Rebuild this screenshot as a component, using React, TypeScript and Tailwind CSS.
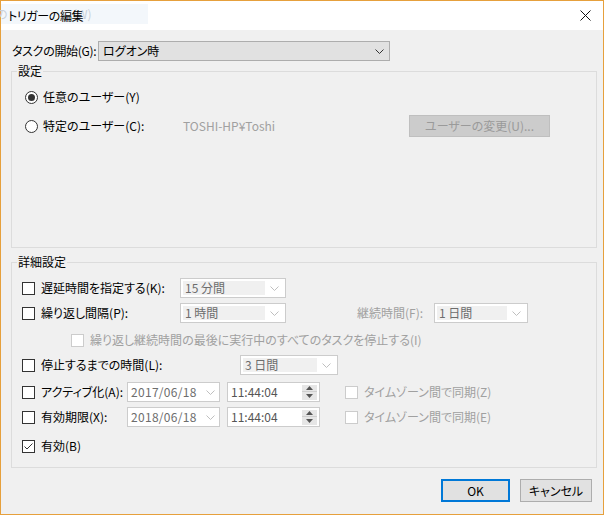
import React from 'react';

const font = "[font-family:'Noto_Sans_CJK_JP',sans-serif] [font-feature-settings:'palt']";

function Chevron({ color = '#333333' }: { color?: string }) {
  return (
    <svg width="9" height="5" viewBox="0 0 9 5" fill="none">
      <polyline points="0.5,0.5 4.5,4.5 8.5,0.5" stroke={color} strokeWidth="1" />
    </svg>
  );
}

function CheckBox({ checked = false, disabled = false }: { checked?: boolean; disabled?: boolean }) {
  return (
    <span
      className={
        'flex h-[13px] w-[13px] shrink-0 items-center justify-center border bg-white ' +
        (disabled ? 'border-[#cccccc]' : 'border-[#333333]')
      }
    >
      {checked && (
        <svg width="11" height="11" viewBox="0 0 11 11" fill="none">
          <polyline points="1.5,5.5 4,8 9.5,2.5" stroke="#333333" strokeWidth="1" />
        </svg>
      )}
    </span>
  );
}

function Radio({ checked = false }: { checked?: boolean }) {
  return (
    <span className="flex h-[13px] w-[13px] shrink-0 items-center justify-center rounded-full border border-[#333333] bg-white">
      {checked && <span className="h-[7px] w-[7px] rounded-full bg-[#333333]" />}
    </span>
  );
}

function Combo({ text, width }: { text: string; width: string }) {
  return (
    <div className={`flex h-[20px] shrink-0 items-center border border-[#cccccc] bg-white p-[2px] ${width}`}>
      <div className="h-full flex-1 bg-[#f0f0f0] pl-[2px] text-[12px] leading-[14px] text-[#6d6d6d]">{text}</div>
      <div className="flex w-[18px] justify-center">
        <Chevron color="#bfbfbf" />
      </div>
    </div>
  );
}

function DateBox({ text }: { text: string }) {
  return (
    <div className="flex h-[20px] w-[93px] shrink-0 items-center border border-[#cccccc] bg-white pl-[3px]">
      <span className="flex-1 text-[12px] leading-[16px] tracking-[0.3px] text-[#6d6d6d]">{text}</span>
      <span className="flex w-[18px] justify-center">
        <Chevron color="#bfbfbf" />
      </span>
    </div>
  );
}

function TimeBox({ text }: { text: string }) {
  return (
    <div className="flex h-[20px] w-[93px] shrink-0 items-center border border-[#cccccc] bg-white pl-[3px] pr-[2px]">
      <span className="flex-1 text-[12px] leading-[16px] text-[#555555]">{text}</span>
      <span className="flex h-[15px] w-[15px] flex-col bg-[#e6e6e6]">
        <span className="flex h-[7px] items-center justify-center border-b border-[#cfcfcf]">
          <svg width="7" height="4" viewBox="0 0 7 4">
            <polygon points="0,4 3.5,0 7,4" fill="#555555" />
          </svg>
        </span>
        <span className="flex h-[8px] items-center justify-center">
          <svg width="7" height="4" viewBox="0 0 7 4">
            <polygon points="0,0 3.5,4 7,0" fill="#555555" />
          </svg>
        </span>
      </span>
    </div>
  );
}

export default function App() {
  return (
    <div className={`h-[516px] w-[606px] whitespace-nowrap bg-white text-[12px] leading-[16px] text-black ${font}`}>
      <div className="flex h-[515px] w-[604px] flex-col border border-[#e6a03c]">
        <div className="relative flex h-[29px] shrink-0 items-center bg-white">
          <div className="absolute left-0 top-[3px] h-[20px] w-[147px] bg-[#f3f7fb]">
            <span className="absolute left-[-5px] top-[2px] text-[12px] text-[#c9d1da]">の</span>
            <span className="absolute left-[72px] top-[2px] text-[12px] text-[#c9d1da]">(W)</span>
          </div>
          <span className="relative ml-[7px] text-[12px] tracking-[-0.4px]">トリガーの編集</span>
          <span className="ml-auto mr-[8px] flex h-[20px] w-[20px] items-center justify-center">
            <svg width="11" height="11" viewBox="0 0 11 11" fill="none">
              <line x1="0.5" y1="0.5" x2="10.5" y2="10.5" stroke="#111111" strokeWidth="1" />
              <line x1="10.5" y1="0.5" x2="0.5" y2="10.5" stroke="#111111" strokeWidth="1" />
            </svg>
          </span>
        </div>

        <div className="flex-1 bg-[#f0f0f0] pl-[10px] pr-[6px] pt-[11px]">
          <div className="flex h-[20px] items-center">
            <span className="w-[87px] shrink-0 pl-[1px] tracking-[-0.3px]">タスクの開始(G):</span>
            <div className="flex h-[20px] w-[292px] items-center border border-[#adadad] bg-[#e1e1e1] pl-[4px] pr-[5px]">
              <span className="flex-1">ログオン時</span>
              <Chevron />
            </div>
          </div>

          <fieldset className="mt-[2px] h-[185px] border border-[#dcdcdc]">
            <legend className="ml-[5px] px-[1px] leading-[16px]">設定</legend>
            <div className="pl-[13px] pt-[8px]">
              <div className="flex h-[20px] items-center gap-[5px]">
                <Radio checked />
                <span>任意のユーザー(Y)</span>
              </div>
              <div className="mt-[8px] flex h-[22px] items-center">
                <Radio />
                <span className="ml-[5px] w-[140px] shrink-0">特定のユーザー(C):</span>
                <span className="w-[226px] shrink-0 text-[#a0a0a0]">TOSHI-HP¥Toshi</span>
                <div className="flex h-[22px] w-[141px] items-center justify-center border border-[#bfbfbf] bg-[#cccccc] text-[#9a9a9a]">
                  ユーザーの変更(U)...
                </div>
              </div>
            </div>
          </fieldset>

          <fieldset className="mt-[6px] h-[214px] border border-[#dcdcdc]">
            <legend className="ml-[5px] px-[1px] leading-[16px]">詳細設定</legend>
            <div className="pl-[10px] pt-[8px]">
              <div className="flex h-[20px] items-center">
                <CheckBox />
                <span className="ml-[6px] w-[139px] shrink-0">遅延時間を指定する(K):</span>
                <Combo text="15 分間" width="w-[106px]" />
              </div>

              <div className="mt-[5px] flex h-[20px] items-center">
                <CheckBox />
                <span className="ml-[6px] w-[139px] shrink-0">繰り返し間隔(P):</span>
                <Combo text="1 時間" width="w-[106px]" />
                <span className="ml-[71px] w-[77px] shrink-0 text-[#a0a0a0]">継続時間(F):</span>
                <Combo text="1 日間" width="w-[94px]" />
              </div>

              <div className="mt-[9px] flex h-[16px] items-center pl-[49px]">
                <CheckBox disabled />
                <span className="ml-[6px] text-[#a0a0a0]">
                  繰り返し継続時間の最後に実行中のすべてのタスクを停止する(I)
                </span>
              </div>

              <div className="mt-[7px] flex h-[20px] items-center">
                <CheckBox />
                <span className="ml-[6px] w-[199px] shrink-0">停止するまでの時間(L):</span>
                <Combo text="3 日間" width="w-[98px]" />
              </div>

              <div className="mt-[7px] flex h-[20px] items-center">
                <CheckBox />
                <span className="ml-[6px] w-[86px] shrink-0">アクティブ化(A):</span>
                <DateBox text="2017/06/18" />
                <span className="ml-[7px]">
                  <TimeBox text="11:44:04" />
                </span>
                <span className="ml-[25px]">
                  <CheckBox disabled />
                </span>
                <span className="ml-[6px] text-[#a0a0a0]">タイムゾーン間で同期(Z)</span>
              </div>

              <div className="mt-[5px] flex h-[20px] items-center">
                <CheckBox />
                <span className="ml-[6px] w-[86px] shrink-0">有効期限(X):</span>
                <DateBox text="2018/06/18" />
                <span className="ml-[7px]">
                  <TimeBox text="11:44:04" />
                </span>
                <span className="ml-[25px]">
                  <CheckBox disabled />
                </span>
                <span className="ml-[6px] text-[#a0a0a0]">タイムゾーン間で同期(E)</span>
              </div>

              <div className="mt-[9px] flex h-[20px] items-center">
                <CheckBox checked />
                <span className="ml-[6px]">有効(B)</span>
              </div>
            </div>
          </fieldset>

          <div className="mt-[11px] flex justify-end gap-[10px] pr-[5px]">
            <button
              type="button"
              className="flex h-[23px] w-[69px] items-center justify-center border-2 border-[#0078d7] bg-[#e1e1e1]"
            >
              OK
            </button>
            <button
              type="button"
              className="flex h-[23px] w-[72px] items-center justify-center border border-[#adadad] bg-[#e1e1e1]"
            >
              キャンセル
            </button>
          </div>
        </div>
      </div>
    </div>
  );
}
